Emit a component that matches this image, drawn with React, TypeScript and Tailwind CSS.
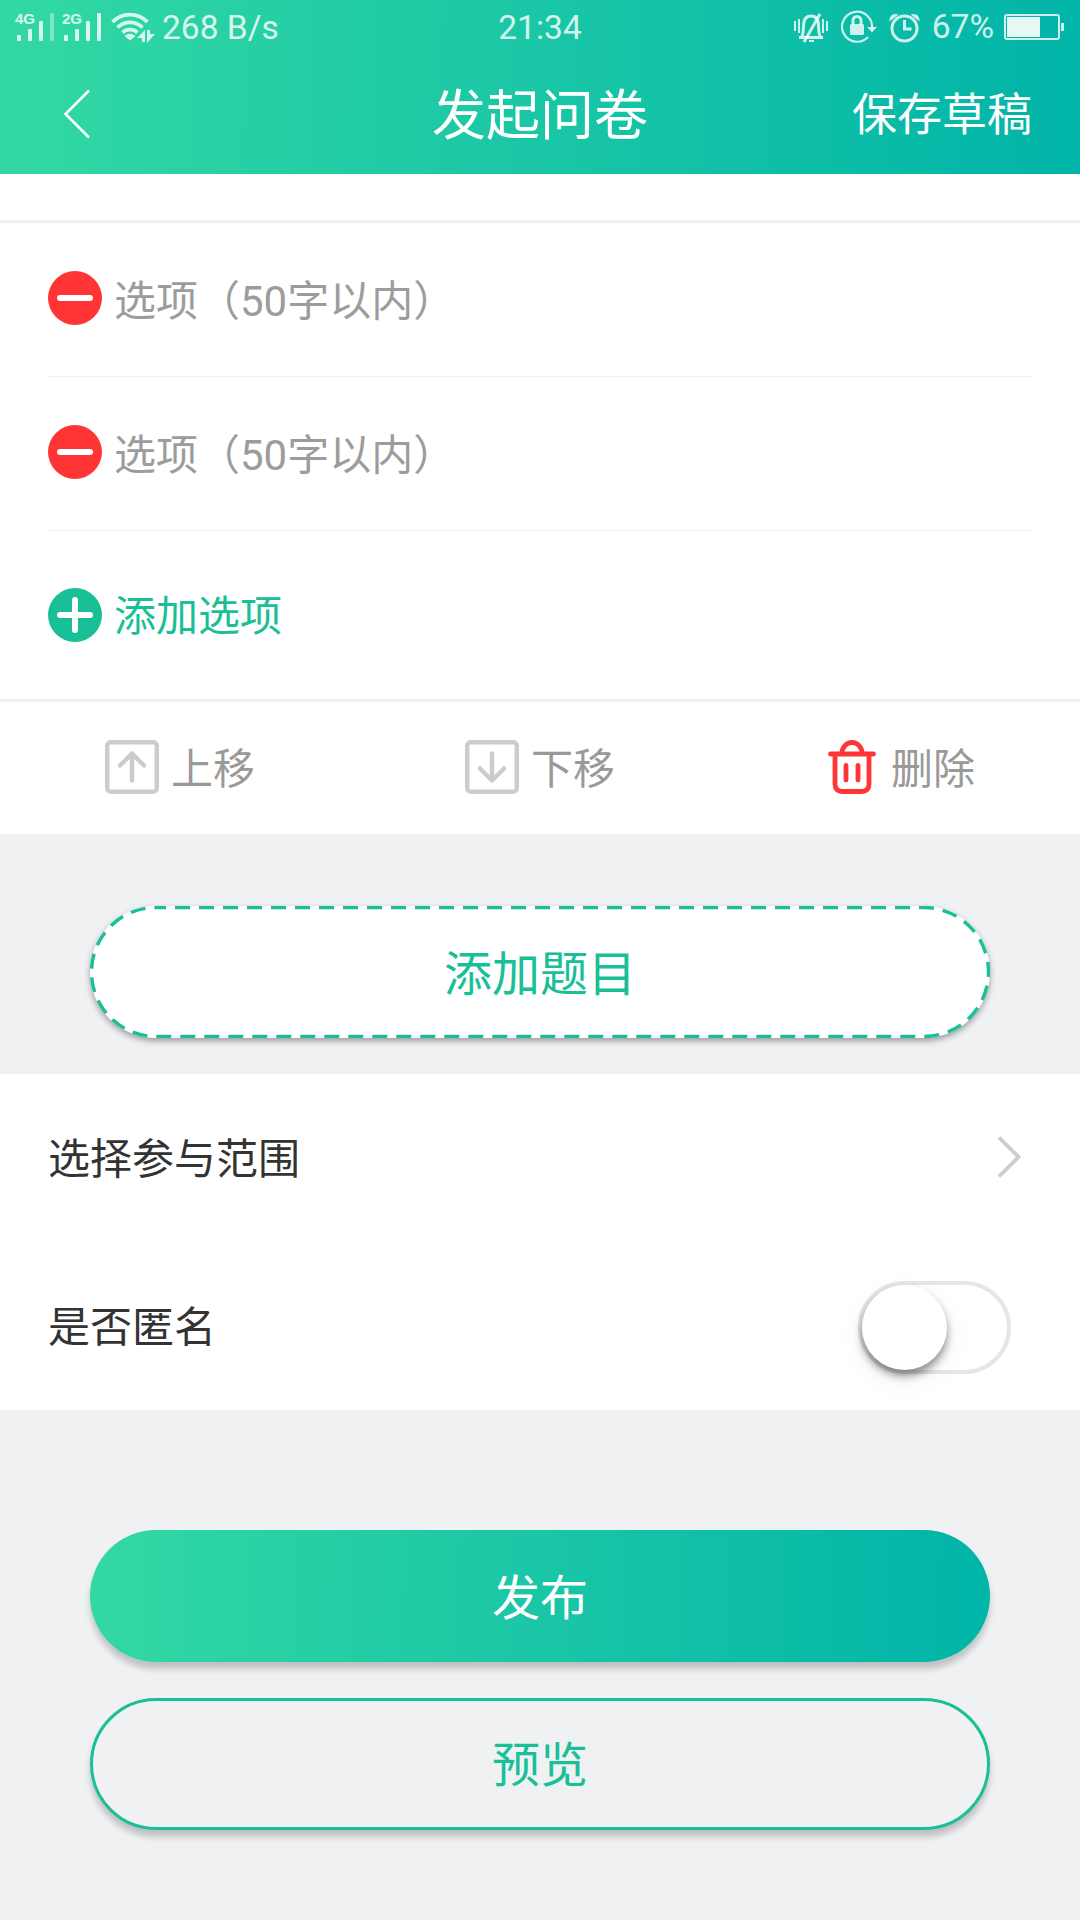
import type { ReactNode } from "react";

const Signal = ({ label, weak }: { label: string; weak?: boolean }) => (
  <svg className="overflow-visible" width="40" height="30" viewBox="0 0 40 30" fill="currentColor">
    <text x="0" y="12" fontSize="15" fontWeight="700" fontFamily="Liberation Sans, sans-serif">
      {label}
    </text>
    <rect x="2" y="23" width="4" height="6" rx="1" />
    <rect x="13" y="17" width="4" height="12" rx="1" />
    <rect x="24" y="9" width="4" height="20" rx="1" />
    <rect x="35" y="1" width="4" height="28" rx="1" opacity={weak ? 0.45 : 1} />
  </svg>
);

const Wifi = () => (
  <svg width="46" height="32" viewBox="0 0 46 32" fill="none" stroke="currentColor" strokeWidth="3.8">
    <path d="M1.5 11A24.5 24.5 0 0 1 36.5 11" />
    <path d="M6.5 16.5A18 18 0 0 1 31.5 16.5" />
    <path d="M11.5 21.5A11 11 0 0 1 26.5 21.5" />
    <path d="M13.5 25Q19 20.500 24.500 25L19 29.500z" fill="currentColor" stroke="none" />
    <path d="M34 19v12h-3v-4h-5zM36 19h3v4h5l-8 9z" fill="currentColor" stroke="none" />
  </svg>
);

const Bell = () => (
  <svg width="34" height="32" viewBox="0 0 34 32" fill="none" stroke="currentColor" strokeWidth="2">
    <path d="M1 10v10M5 8v14M29 8v14M33 10v10" />
    <path d="M5 26.500h24M8 26c1-3 1.500-6 1.500-11C9.500 8 12 5 17 5s7.500 3 7.500 10c0 5 .5 8 1.500 11" strokeWidth="3" />
    <path d="M10 31L26 3" strokeWidth="3" />
    <path d="M15 30h5" />
  </svg>
);

const RotateLock = () => (
  <svg width="36" height="34" viewBox="0 0 36 34" fill="none" stroke="currentColor" strokeWidth="2.200">
    <path d="M31 18A15 15 0 1 0 27 27" />
    <path d="M26 17h10l-5 5.500z" fill="currentColor" stroke="none" />
    <rect x="9" y="14" width="14" height="11" rx="1.500" fill="currentColor" stroke="none" />
    <path d="M12 15v-4.500a4 4 0 0 1 8 0V15" strokeWidth="3" />
  </svg>
);

const Alarm = () => (
  <svg width="31" height="32" viewBox="0 0 31 32" fill="none" stroke="currentColor" strokeWidth="3">
    <circle cx="15.500" cy="17.500" r="12.500" />
    <path d="M15.500 9v9h7" />
    <path d="M.5 10.500C0 5 4 1.500 9.500 3.500zM30.500 10.500C31 5 27 1.500 21.500 3.500z" fill="currentColor" stroke="none" />
  </svg>
);

const Battery = () => (
  <svg width="61" height="28" viewBox="0 0 61 28" fill="currentColor">
    <rect x="1" y="2" width="54" height="24" rx="2" fill="none" stroke="currentColor" strokeWidth="2" />
    <rect x="3" y="4" width="33" height="20" className="text-white/90" />
    <rect x="57" y="10" width="3" height="8" />
  </svg>
);

const CircleIcon = ({ plus }: { plus?: boolean }) => (
  <svg width="54" height="54" viewBox="0 0 54 54" stroke="#fff" strokeWidth="6" strokeLinecap="round">
    <circle cx="27" cy="27" r="27" fill={plus ? "#19bf96" : "#ff3434"} stroke="none" />
    <path d={plus ? "M12 27h30M27 12v30" : "M12 27h30"} />
  </svg>
);

const MoveIcon = ({ down }: { down?: boolean }) => (
  <svg
    width="54"
    height="54"
    viewBox="0 0 54 54"
    fill="none"
    stroke="#ccc"
    strokeWidth="4.500"
    strokeLinecap="round"
    strokeLinejoin="round"
  >
    <rect x="2.250" y="2.250" width="49.500" height="49.500" rx="3.500" />
    <path d={down ? "M27 13.500v27M15 28.500l12 12 12-12" : "M27 40.500v-27M15 25.500l12-12 12 12"} />
  </svg>
);

const Trash = () => (
  <svg width="54" height="54" viewBox="0 0 54 54" fill="none" stroke="#ff3434" strokeWidth="4.800" strokeLinecap="round">
    <path d="M5.500 14h43M17 13a10 10.500 0 0 1 20 0" />
    <path d="M10 15v29q0 7.500 7.500 7.500h19q7.500 0 7.500-7.500V15" />
    <path d="M21 25.500v14.500M33 25.500v14.500" />
  </svg>
);

const OptionRow = () => (
  <div className="mx-12 flex h-[154px] items-center gap-3 border-b border-[#f0f0f0] pb-[3px] text-[#9c9c9c]">
    <CircleIcon />
    <span className="pt-[7px]">选项（50字以内）</span>
  </div>
);

const Action = ({ icon, label }: { icon: ReactNode; label: string }) => (
  <button className="flex flex-1 items-center justify-center gap-3 pb-[2px]">
    {icon}
    <span className="pt-[6px]">{label}</span>
  </button>
);

export default function App() {
  return (
    <div className="flex h-[1920px] w-[1080px] flex-col overflow-hidden bg-[#eff1f3] font-[Roboto,'Noto_Sans_CJK_SC',sans-serif] text-[42px] leading-none text-[#333]">
      {/* Header */}
      <header className="h-[174px] bg-linear-[91deg,#33d8a3,#00b4a8] text-white">
        <div className="grid h-[54px] grid-cols-3 items-center text-[33.5px] text-white/80">
          <div className="flex items-center pl-[15px]">
            <Signal label="4G" weak />
            <span className="w-[7px]" />
            <Signal label="2G" />
            <span className="w-[9px]" />
            <Wifi />
            <span className="ml-[5px] pt-px whitespace-nowrap">268 B/s</span>
          </div>
          <span className="pt-[2px] text-center">21:34</span>
          <div className="flex items-center justify-end pr-[15px]">
            <Bell />
            <span className="w-[13px]" />
            <RotateLock />
            <span className="w-3" />
            <Alarm />
            <span className="mr-[10px] ml-3">67%</span>
            <Battery />
          </div>
        </div>
        <div className="grid h-[120px] grid-cols-3 items-center px-12">
          <svg className="ml-[15px]" width="28" height="50" viewBox="0 0 28 50" fill="none" stroke="#fff" strokeWidth="2.600">
            <path d="M26 1.500L2.500 25 26 48.500" />
          </svg>
          <h1 className="pt-[6px] text-center text-[54px]">发起问卷</h1>
          <button className="pt-[3px] text-right text-[45px]">保存草稿</button>
        </div>
      </header>

      {/* Question options */}
      <section className="bg-white">
        <div className="h-[49px] border-b-[3px] border-[#eff0f2]" />
        <OptionRow />
        <OptionRow />
        <button className="flex h-[168px] w-full items-center gap-3 px-12 text-[#19bf96]">
          <CircleIcon plus />
          <span className="pt-1">添加选项</span>
        </button>
        <div className="flex h-[135px] border-t-[3px] border-[#eff0f2] text-[#999]">
          <Action icon={<MoveIcon />} label="上移" />
          <Action icon={<MoveIcon down />} label="下移" />
          <Action icon={<Trash />} label="删除" />
        </div>
      </section>

      {/* Add question */}
      <div className="flex h-[240px] justify-center pt-[72px]">
        <button className="relative h-[132px] w-[900px] rounded-full bg-white pt-[5px] text-[48px] text-[#19bf96] shadow-[0_3px_6px_rgba(0,0,0,0.36)]">
          <svg className="absolute inset-0" width="900" height="132" fill="none" stroke="#19bf96" strokeWidth="3.400">
            <rect x="1.500" y="1.500" width="897" height="129" rx="64.500" strokeDasharray="15 9" strokeDashoffset="5" />
          </svg>
          添加题目
        </button>
      </div>

      {/* Settings */}
      <section className="bg-white px-12">
        <div className="flex h-[168px] items-center justify-between">
          <span className="pt-1">选择参与范围</span>
          <svg className="mr-[11px] mb-[2px]" width="24" height="44" viewBox="0 0 24 44" fill="none" stroke="#ccc" strokeWidth="3.800">
            <path d="M2 2.500L21.500 22 2 41.500" />
          </svg>
        </div>
        <div className="flex h-[168px] items-center justify-between">
          <span className="pt-1">是否匿名</span>
          <div className="mt-[3px] mr-[21px] h-[93px] w-[153px] rounded-full border-4 border-[#e5e5ea]">
            <div className="h-[85px] w-[85px] rounded-full bg-white shadow-[0_6px_9px_rgba(0,0,0,0.42),0_9px_30px_rgba(0,0,0,0.06)]" />
          </div>
        </div>
      </section>

      {/* Submit */}
      <div className="flex flex-col items-center gap-9 pt-[120px] text-[48px]">
        <button className="h-[132px] w-[900px] rounded-full bg-linear-[91deg,#33d8a3,#00b4a8] pt-[5px] text-white shadow-[0_7px_6px_rgba(0,0,0,0.2)]">
          发布
        </button>
        <button className="h-[132px] w-[900px] rounded-full border-[3px] border-[#19bf96] bg-[#eff1f3] pt-1 text-[#19bf96] shadow-[0_7px_6px_rgba(0,0,0,0.2)]">
          预览
        </button>
      </div>
    </div>
  );
}
